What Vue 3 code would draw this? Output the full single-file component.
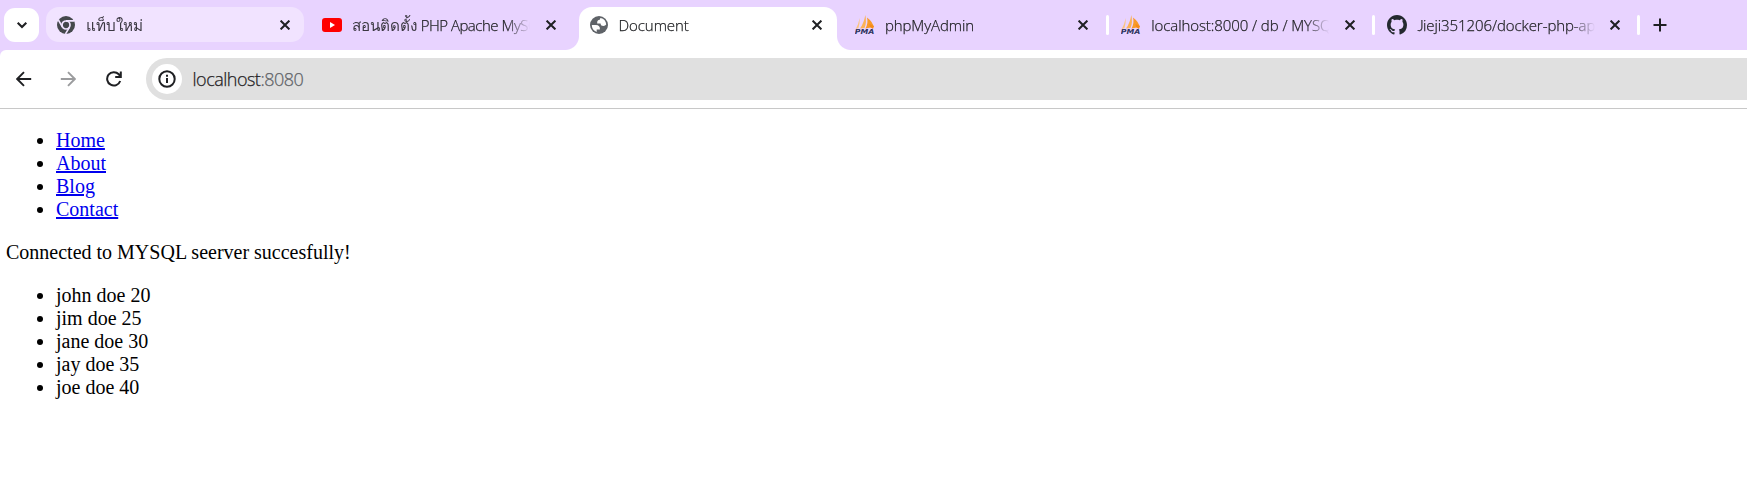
<script setup>
const tabs = [
  { id: 'newtab', parts: [{ text: 'แท็บใหม่', kind: 'thai' }], icon: 'chrome', state: 'hover' },
  { id: 'video', parts: [{ text: 'สอนติดตั้ง', kind: 'thai' }, { text: ' PHP Apache MySQL', kind: 'tight' }], icon: 'youtube', state: '' },
  { id: 'doc', parts: [{ text: 'Document', kind: 'latin' }], icon: 'globe', state: 'active' },
  { id: 'pma', parts: [{ text: 'phpMyAdmin', kind: 'latin' }], icon: 'pma', state: 'divided' },
  { id: 'db', parts: [{ text: 'localhost:8000 / db / MYSQL', kind: 'latin' }], icon: 'pma', state: 'divided' },
  { id: 'repo', parts: [{ text: 'J', kind: 'initial' }, { text: 'ieji351206/docker-php-apache', kind: 'latin' }], icon: 'github', state: 'divided last' },
]
const links = ['Home', 'About', 'Blog', 'Contact']
const people = ['john doe 20', 'jim doe 25', 'jane doe 30', 'jay doe 35', 'joe doe 40']
</script>

<template>
  <div class="browser">
    <header class="strip">
      <button class="search">
        <svg width="12" height="12" viewBox="0 0 12 12"><path d="M1.7 3.7 6 8l4.300-4.300" fill="none" stroke="#1f2023" stroke-width="2.100" /></svg>
      </button>
      <div class="tabs">
        <div v-for="tab in tabs" :key="tab.id" class="tab" :class="tab.state">
          <span class="icon">
            <svg v-if="tab.icon === 'chrome'" width="18" height="18" viewBox="0 0 18 18">
              <circle cx="9" cy="9" r="9" fill="#45484c" />
              <circle cx="9" cy="9" r="4" fill="none" stroke="#f1e3ff" stroke-width="1.700" />
              <path d="M9 4.900h8.200M5.500 11.100 1.400 4M12.500 11.100 8.500 18" fill="none" stroke="#f1e3ff" stroke-width="1.600" />
            </svg>
            <svg v-else-if="tab.icon === 'youtube'" width="20" height="14" viewBox="0 0 20 14">
              <rect width="20" height="14" rx="3" fill="#f00" />
              <path d="M8 4v6l5-3z" fill="#fff" />
            </svg>
            <svg v-else-if="tab.icon === 'globe'" width="18" height="18" viewBox="0 0 18 18">
              <circle cx="9" cy="9" r="9" fill="#5f6368" />
              <path d="M1.800 9h4c3 0 4.400 1.500 4.100 4.600H6.700v2.300A7.200 7.200 0 0 1 1.800 9z" fill="#fff" />
              <path d="M10.600 2c-.5.400-.8.900-.8 1.700-2 0-2.800 1.300-2.600 3.700h3.400c0 1.700 1 2.500 2.900 2.500 1.200 0 2-.5 2.700-1.300A7.200 7.200 0 0 0 10.600 2z" fill="#fff" />
            </svg>
            <svg v-else-if="tab.icon === 'pma'" width="20" height="20" viewBox="0 0 20 20">
              <path d="M4.700 3Q5 8 3.500 13L.8 14Q3.500 9 4.700 3z" fill="#fbc480" />
              <path d="M10.300 0Q12 7 9.500 13L5 13.500Q9 8 10.300 0z" fill="#fbb257" />
              <path d="M12 2.500Q18 7 18.500 12L10.500 13.500Q13.500 8 12 2.500z" fill="#f89a2a" />
              <path d="m14.500 9 4.500 2-1 3-3-2z" fill="#f58b18" />
              <text x="-.2" y="19" textLength="19.500" lengthAdjust="spacingAndGlyphs" class="pma-text">PMA</text>
            </svg>
            <svg v-else width="20" height="20" viewBox="0 0 16 16">
              <path fill="#24292f" d="M8 0C3.580 0 0 3.580 0 8c0 3.540 2.290 6.530 5.470 7.590.4.070.55-.17.55-.38 0-.19-.01-.82-.01-1.490-2.010.37-2.530-.49-2.690-.94-.09-.23-.48-.94-.82-1.130-.28-.15-.68-.52-.01-.53.63-.01 1.080.58 1.230.82.72 1.210 1.870.87 2.330.66.07-.52.28-.87.51-1.070-1.780-.2-3.640-.89-3.640-3.950 0-.87.31-1.590.82-2.150-.08-.2-.36-1.020.08-2.120 0 0 .67-.21 2.200.82.64-.18 1.320-.27 2-.27s1.360.09 2 .27c1.530-1.040 2.200-.82 2.200-.82.44 1.100.16 1.920.08 2.120.51.56.82 1.270.82 2.150 0 3.070-1.870 3.750-3.650 3.950.29.25.54.73.54 1.480 0 1.070-.01 1.930-.01 2.200 0 .21.15.46.55.38A8.010 8.010 0 0 0 16 8c0-4.420-3.580-8-8-8z" />
            </svg>
          </span>
          <span class="title"><span v-for="part in tab.parts" :key="part.text" :class="part.kind">{{ part.text }}</span></span>
          <svg class="close" width="10" height="10" viewBox="0 0 10 10"><path d="m.6.6 8.800 8.800M9.400.6.6 9.400" stroke="#1f2023" stroke-width="2" /></svg>
        </div>
      </div>
      <svg class="plus" width="14" height="14" viewBox="0 0 14 14"><path d="M7 .5v13M.5 7h13" stroke="#1f2023" stroke-width="2" /></svg>
    </header>
    <div class="toolbar-back">
      <nav class="toolbar">
        <svg class="nav" width="16" height="16" viewBox="0 0 16 16"><path d="M15.200 8H1.800M8 1.200 1.200 8 8 14.800" fill="none" stroke="#1f2023" stroke-width="1.900" /></svg>
        <svg class="nav forward" width="16" height="16" viewBox="0 0 16 16"><path d="M.8 8h13.400M8 1.200 14.800 8 8 14.800" fill="none" stroke="#9b9c9e" stroke-width="1.900" /></svg>
        <svg class="nav" width="16" height="16" viewBox="0 0 16 16"><path d="M14.200 10A6.700 6.700 0 1 1 12.800 3.300L14.500 5.500M14.800.5v5.600H9.200" fill="none" stroke="#1f2023" stroke-width="2" /></svg>
        <div class="address">
          <span class="info">
            <svg width="18" height="18" viewBox="0 0 18 18"><circle cx="9" cy="9" r="7.700" fill="none" stroke="#1f2023" stroke-width="2" /><path d="M9 8v5M9 4.700v2" stroke="#1f2023" stroke-width="2" /></svg>
          </span>
          <span class="url">localhost<span class="port">:8080</span></span>
        </div>
      </nav>
    </div>
    <main class="page">
      <ul>
        <li v-for="link in links" :key="link"><a href="#">{{ link }}</a></li>
      </ul>
      <p>Connected to MYSQL seerver succesfully!</p>
      <ul>
        <li v-for="person in people" :key="person">{{ person }}</li>
      </ul>
    </main>
  </div>
</template>

<style>
body {
  margin: 0;
  background: #fff;
}
</style>

<style scoped>
.browser {
  width: 100%;
  height: 486px;
  overflow: hidden;
  background: #fff;
}
.strip {
  box-sizing: border-box;
  height: 50px;
  padding: 7px 0 0 4px;
  display: flex;
  background: #e8d3ff;
  font-family: "Open Sans", "Noto Sans", sans-serif;
  font-weight: 300;
}
.search {
  width: 35px;
  height: 34px;
  margin: 1px 7px 0 0;
  padding: 0;
  border: 0;
  border-radius: 11px;
  background: #fff;
  display: grid;
  place-items: center;
  flex: none;
}
.tabs {
  display: flex;
  gap: 8.300px;
  flex: none;
}
.tab {
  position: relative;
  box-sizing: border-box;
  width: 258px;
  height: 35px;
  padding: 0 14.500px 0 10px;
  display: flex;
  align-items: center;
  border-radius: 13px;
}
.hover {
  background: #f1e3ff;
}
.active {
  height: 43px;
  padding-bottom: 8px;
  border-radius: 13px 13px 0 0;
  background: #fff;
}
.active::before,
.active::after {
  content: "";
  position: absolute;
  bottom: 0;
  width: 14px;
  height: 14px;
}
.active::before {
  left: -14px;
  background: radial-gradient(circle at 0 0, transparent 13.500px, #fff 14.500px);
}
.active::after {
  right: -14px;
  background: radial-gradient(circle at 100% 0, transparent 13.500px, #fff 14.500px);
}
.divided::after {
  content: "";
  position: absolute;
  right: -5.700px;
  top: 8px;
  width: 3px;
  height: 20px;
  border-radius: 1.500px;
  background: #fff;
}
.tab.last {
  width: 256.700px;
}
.icon {
  width: 20px;
  height: 20px;
  display: grid;
  place-items: center;
  flex: none;
}
.pma-text {
  font: italic bold 7px "DejaVu Sans", sans-serif;
  fill: #2f3560;
}
.title {
  width: 178px;
  margin-left: 10px;
  overflow: hidden;
  white-space: pre;
  font-size: 15px;
  line-height: 28px;
  color: #1f2023;
  -webkit-mask-image: linear-gradient(90deg, #000 155px, transparent 178px);
  mask-image: linear-gradient(90deg, #000 155px, transparent 178px);
}
.latin,
.tight,
.initial {
  letter-spacing: -0.08px;
  -webkit-text-stroke: 0.25px #1f2023;
}
.tight {
  letter-spacing: -0.5px;
}
.initial {
  font-family: Lato, sans-serif;
  letter-spacing: -0.8px;
}
.thai {
  font-size: 15.300px;
  color: #3b3842;
}
.close {
  margin-left: auto;
  flex: none;
}
.plus {
  margin: 11px 0 0 18.500px;
}
.toolbar-back {
  background: #e8d3ff;
}
.toolbar {
  box-sizing: border-box;
  height: 59px;
  padding: 8px 0 8px 15.600px;
  display: flex;
  align-items: center;
  border-bottom: 1px solid #c8c8c8;
  border-top-left-radius: 6px;
  background: #fff;
}
.nav {
  margin-right: 29px;
  flex: none;
}
.forward {
  margin-left: -0.6px;
  margin-right: 29.600px;
}
.address {
  flex: 1;
  height: 42px;
  margin-left: -4.600px;
  padding-left: 6px;
  display: flex;
  align-items: center;
  border-radius: 21px 0 0 21px;
  background: #e0e0e0;
}
.info {
  width: 30px;
  height: 30px;
  margin-right: 10.500px;
  border-radius: 50%;
  background: #fff;
  display: grid;
  place-items: center;
}
.url {
  font: 300 18px "Open Sans", "Noto Sans", sans-serif;
  letter-spacing: -0.5px;
  color: #1f2023;
  -webkit-text-stroke: 0.25px;
}
.port {
  color: #5f6368;
}
.page {
  padding: 20px 6px;
  font: 20px/23px "Liberation Serif", serif;
  color: #000;
}
.page ul,
.page p {
  margin: 0 0 20px;
}
.page ul {
  padding-left: 50px;
}
.page a {
  color: #0000ee;
  text-decoration: underline;
}
</style>
